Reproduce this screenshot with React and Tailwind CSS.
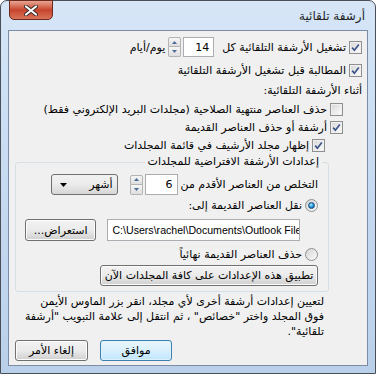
import React from 'react';

function Check({ checked }) {
  return (
    <span className="flex h-[13px] w-[13px] shrink-0 items-center justify-center border border-[#8e8f8f] bg-white">
      <span className="flex h-[11px] w-[11px] items-center justify-center border border-[#f0f0f0] bg-gradient-to-br from-[#d9d9d9] to-[#fbfbfb]">
        {checked && (
          <svg width="9" height="9" viewBox="0 0 9 9">
            <path d="M1.2 4.6 L3.4 7.2 L7.8 1.4" fill="none" stroke="#3c538a" strokeWidth="1.7" />
          </svg>
        )}
      </span>
    </span>
  );
}

function Radio({ checked }) {
  return (
    <span className="flex h-[13px] w-[13px] shrink-0 items-center justify-center rounded-full border border-[#8e8f8f] bg-gradient-to-br from-[#d4d4d4] to-[#fcfcfc]">
      {checked && (
        <span className="h-[7px] w-[7px] rounded-full border border-[#1b4f7f] bg-[radial-gradient(circle_at_40%_35%,#b3ecff,#1c8fd6_55%,#0a4c86)]" />
      )}
    </span>
  );
}

function Spinner() {
  return (
    <div className="flex h-[20px] w-[13px] shrink-0 flex-col">
      <div className="flex h-[10px] items-center justify-center rounded-t-[2px] border border-[#b3b3b3] bg-gradient-to-b from-[#f6f6f6] to-[#dedede]">
        <svg width="5" height="3" viewBox="0 0 5 3"><path d="M0 3 L2.5 0 L5 3 Z" fill="#4a6a9a" /></svg>
      </div>
      <div className="flex h-[10px] items-center justify-center rounded-b-[2px] border border-t-0 border-[#b3b3b3] bg-gradient-to-b from-[#f6f6f6] to-[#dedede]">
        <svg width="5" height="3" viewBox="0 0 5 3"><path d="M0 0 L2.5 3 L5 0 Z" fill="#4a6a9a" /></svg>
      </div>
    </div>
  );
}

function Btn({ children, className = '', primary }) {
  return (
    <div
      className={
        'flex items-center justify-center rounded-[3px] border ' +
        (primary
          ? 'border-[#3c7fb1] bg-gradient-to-b from-[#eaf6fd] via-[#d9f0fc] to-[#bee6fd] shadow-[inset_0_0_0_1px_#dff2fc] '
          : 'border-[#707070] bg-gradient-to-b from-[#f2f2f2] via-[#ebebeb] to-[#cfcfcf] shadow-[inset_0_0_0_1px_#fcfcfc] ') +
        className
      }
    >
      {children}
    </div>
  );
}

export default function App() {
  return (
    <div className="h-[374px] w-[376px] overflow-hidden bg-white font-['DejaVu_Sans',sans-serif] text-[11px] leading-none text-black">
      <div className="relative flex h-full w-full flex-col rounded-t-[7px] border border-[#4a4f57] bg-gradient-to-b from-[#d6e6f7] via-[#c6daf1] to-[#bad0ea] px-[7px] pb-[7px] pt-[29px]">
        <div className="absolute left-[8px] top-[-1px] flex h-[20px] w-[44px] items-center justify-center rounded-b-[5px] border border-[#6b2a1e] bg-gradient-to-b from-[#e8a593] via-[#c7432a] to-[#d9735a]">
          <svg width="14" height="11" viewBox="0 0 14 11">
            <path d="M2 1.5 L12 9.5 M12 1.5 L2 9.5" stroke="#3a2a2a" strokeWidth="4" strokeLinecap="round" />
            <path d="M2 1.5 L12 9.5 M12 1.5 L2 9.5" stroke="#ffffff" strokeWidth="2.2" strokeLinecap="round" />
          </svg>
        </div>
        <div dir="rtl" className="absolute right-[10px] top-[9px] text-[12px] text-[#1e1e1e]">
          أرشفة تلقائية
        </div>

        <div dir="rtl" className="flex flex-1 flex-col border border-[#7b8ca4] bg-[#f0f0f0] pl-[6px] pr-[5px] pt-[6px]">
          <div className="flex h-[20px] items-center">
            <Check checked />
            <span className="mr-[3px]">تشغيل الأرشفة التلقائية كل</span>
            <div className="mr-[8px] flex h-[20px] w-[31px] items-center border border-[#abadb3] bg-white px-[4px]">14</div>
            <div className="mr-[2px]"><Spinner /></div>
            <span className="mr-[3px]">يوم/أيام</span>
          </div>

          <div className="mt-[5px] flex h-[16px] items-center">
            <Check checked />
            <span className="mr-[3px]">المطالبة قبل تشغيل الأرشفة التلقائية</span>
          </div>

          <div className="mt-[4px] flex h-[16px] items-center">أثناء الأرشفة التلقائية:</div>

          <div className="mt-[3px] flex h-[16px] items-center pr-[19px]">
            <Check />
            <span className="mr-[3px]">حذف العناصر منتهية الصلاحية (مجلدات البريد الإلكتروني فقط)</span>
          </div>

          <div className="mt-[2px] flex h-[16px] items-center pr-[19px]">
            <Check checked />
            <span className="mr-[3px]">أرشفة أو حذف العناصر القديمة</span>
          </div>

          <div className="mt-[2px] flex h-[16px] items-center pr-[37px]">
            <Check checked />
            <span className="mr-[3px]">إظهار مجلد الأرشيف في قائمة المجلدات</span>
          </div>

          <div className="relative ml-[0px] mr-[33px] mt-[9px] rounded-[3px] border border-[#d5dfe5] pb-[5px] pl-[9px] pr-[10px] pt-[11px]">
            <div className="absolute right-[6px] top-[-7px] bg-[#f0f0f0] px-[3px]">إعدادات الأرشفة الافتراضية للمجلدات</div>

            <div className="flex h-[21px] items-center">
              <span>التخلص من العناصر الأقدم من</span>
              <div className="mr-[3px] flex h-[21px] w-[33px] items-center border border-[#abadb3] bg-white px-[4px]">6</div>
              <div className="mr-[2px]"><Spinner /></div>
              <div className="mr-[12px] flex h-[21px] w-[67px] items-center justify-between rounded-[3px] border border-[#707070] bg-gradient-to-b from-[#f2f2f2] via-[#ebebeb] to-[#d6d6d6] pl-[8px] pr-[4px]">
                <span>أشهر</span>
                <svg width="7" height="4" viewBox="0 0 7 4"><path d="M0 0 L3.5 4 L7 0 Z" fill="#000" /></svg>
              </div>
            </div>

            <div className="mt-[2px] flex h-[16px] items-center">
              <Radio checked />
              <span className="mr-[3px]">نقل العناصر القديمة إلى:</span>
            </div>

            <div className="mt-[6px] flex h-[22px] items-center pr-[18px]">
              <div dir="ltr" className="flex h-[22px] w-[194px] items-center overflow-hidden whitespace-nowrap border border-[#abadb3] bg-white pl-[4px] font-['Liberation_Sans',sans-serif] text-[10.6px]">
                C:\Users\rachel\Documents\Outlook Files\archive.pst
              </div>
              <Btn className="mr-[11px] h-[22px] w-[72px]">استعراض...</Btn>
            </div>

            <div className="mt-[5px] flex h-[16px] items-center">
              <Radio />
              <span className="mr-[3px]">حذف العناصر القديمة نهائياً</span>
            </div>

            <div className="mt-[3px] flex h-[21px] items-center">
              <Btn className="h-[21px] w-[218px]">تطبيق هذه الإعدادات على كافة المجلدات الآن</Btn>
            </div>
          </div>

          <div className="mr-[38px] mt-[4px] flex flex-col gap-[3px] leading-[12px]">
            <span>لتعيين إعدادات أرشفة أخرى لأي مجلد، انقر بزر الماوس الأيمن</span>
            <span>فوق المجلد واختر "خصائص" ، ثم انتقل إلى علامة التبويب "أرشفة</span>
            <span>تلقائية".</span>
          </div>

          <div className="mt-[2px] flex items-center gap-[12px] pr-[190px]">
            <Btn primary className="h-[21px] w-[72px]">موافق</Btn>
            <Btn className="h-[21px] w-[73px]">إلغاء الأمر</Btn>
          </div>
        </div>
      </div>
    </div>
  );
}
